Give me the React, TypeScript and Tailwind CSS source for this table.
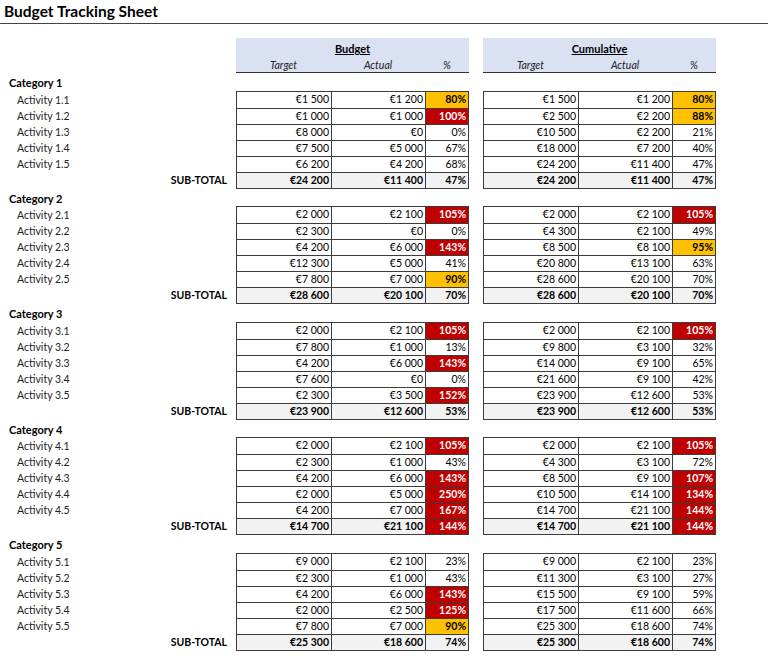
import React from "react";

type Row = [number, number, number, number]; // budget target, budget actual, cum target, cum actual

const categories: { name: string; rows: Row[] }[] = [
  {
    name: "Category 1",
    rows: [
      [1500, 1200, 1500, 1200],
      [1000, 1000, 2500, 2200],
      [8000, 0, 10500, 2200],
      [7500, 5000, 18000, 7200],
      [6200, 4200, 24200, 11400],
    ],
  },
  {
    name: "Category 2",
    rows: [
      [2000, 2100, 2000, 2100],
      [2300, 0, 4300, 2100],
      [4200, 6000, 8500, 8100],
      [12300, 5000, 20800, 13100],
      [7800, 7000, 28600, 20100],
    ],
  },
  {
    name: "Category 3",
    rows: [
      [2000, 2100, 2000, 2100],
      [7800, 1000, 9800, 3100],
      [4200, 6000, 14000, 9100],
      [7600, 0, 21600, 9100],
      [2300, 3500, 23900, 12600],
    ],
  },
  {
    name: "Category 4",
    rows: [
      [2000, 2100, 2000, 2100],
      [2300, 1000, 4300, 3100],
      [4200, 6000, 8500, 9100],
      [2000, 5000, 10500, 14100],
      [4200, 7000, 14700, 21100],
    ],
  },
  {
    name: "Category 5",
    rows: [
      [9000, 2100, 9000, 2100],
      [2300, 1000, 11300, 3100],
      [4200, 6000, 15500, 9100],
      [2000, 2500, 17500, 11600],
      [7800, 7000, 25300, 18600],
    ],
  },
];

const euro = (n: number) => "€" + n.toString().replace(/\B(?=(\d{3})+(?!\d))/g, " ");

const pctClass = (p: number) => {
  if (p >= 100) return "bg-[#c00000] text-white font-bold";
  if (p >= 80) return "bg-[#ffc000] text-black font-bold";
  return "";
};

const DataTable = ({ rows, total }: { rows: [number, number][]; total: [number, number] }) => {
  const all = [...rows, total];
  return (
    <div className="w-[233px] border border-[#3c3c3c]">
      {all.map(([t, a], i) => {
        const isTotal = i === all.length - 1;
        const p = Math.round((a / t) * 100);
        return (
          <div
            key={i}
            className={`flex h-[16px] ${i > 0 ? "border-t border-[#3c3c3c]" : ""} ${isTotal ? "bg-[#f2f2f2] font-bold" : "bg-white"}`}
          >
            <div className="w-[95px] border-r border-[#3c3c3c] pr-[2px] text-right leading-[15px]">{euro(t)}</div>
            <div className="w-[94px] border-r border-[#3c3c3c] pr-[2px] text-right leading-[15px]">{euro(a)}</div>
            <div className={`flex-1 pr-[2px] text-right leading-[15px] ${pctClass(p)}`}>{p}%</div>
          </div>
        );
      })}
    </div>
  );
};

const HeaderBox = ({ title }: { title: string }) => (
  <div className="w-[233px] h-[35px] bg-[#d9e1f2] border-b border-[#333] flex flex-col">
    <div className="h-[20px] pt-[4px] text-center font-bold underline text-[11px] leading-[14px]">{title}</div>
    <div className="flex italic text-[#222] leading-[14px]">
      <div className="w-[95px] text-center">Target</div>
      <div className="w-[94px] text-center">Actual</div>
      <div className="flex-1 text-center">%</div>
    </div>
  </div>
);

export default function App() {
  return (
    <div className="w-[768px] min-h-[669px] bg-white text-black text-[10.5px]" style={{ fontFamily: "Lato, 'Noto Sans', sans-serif" }}>
      {/* Title */}
      <div className="h-[24px] border-b border-[#444] pl-[4px] pt-[2px]">
        <h1 className="text-[15.5px] font-bold leading-[19px]">Budget Tracking Sheet</h1>
      </div>

      {/* Column headers */}
      <div className="flex mt-[14px]">
        <div className="w-[236px]" />
        <HeaderBox title="Budget" />
        <div className="w-[14px]" />
        <HeaderBox title="Cumulative" />
      </div>

      {/* Category blocks */}
      {categories.map((cat, ci) => {
        const n = ci + 1;
        const tot: Row = cat.rows.reduce(
          (acc, r) => [acc[0] + r[0], acc[1] + r[1], r[2], r[3]] as Row,
          [0, 0, 0, 0] as Row
        );
        return (
          <div key={cat.name}>
            <div className="h-[17.5px] pl-[9px] pt-[3px] font-bold text-[11px] leading-[14px]">{cat.name}</div>
            <div className="flex">
              <div className="w-[236px] pt-[1px]">
                {cat.rows.map((_, i) => (
                  <div key={i} className="h-[16px] pl-[17px] leading-[16px] text-[#222]">
                    Activity {n}.{i + 1}
                  </div>
                ))}
                <div className="h-[16px] pr-[9px] text-right font-bold leading-[16px]">SUB-TOTAL</div>
              </div>
              <DataTable rows={cat.rows.map((r) => [r[0], r[1]] as [number, number])} total={[tot[0], tot[1]]} />
              <div className="w-[14px]" />
              <DataTable rows={cat.rows.map((r) => [r[2], r[3]] as [number, number])} total={[tot[2], tot[3]]} />
            </div>
          </div>
        );
      })}
    </div>
  );
}
